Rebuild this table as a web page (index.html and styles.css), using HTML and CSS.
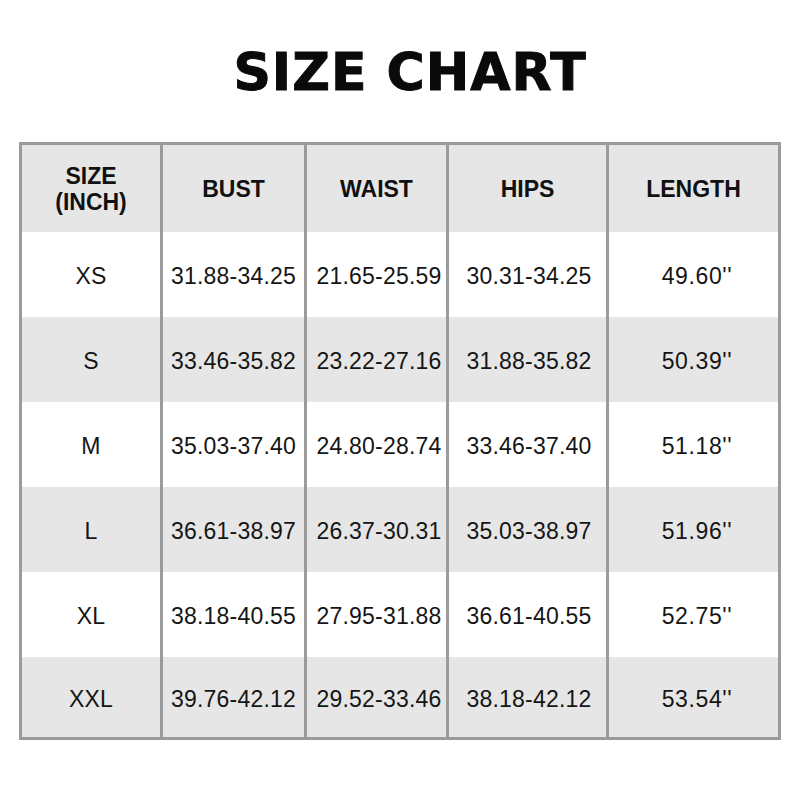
FILE: index.html
```html
<!DOCTYPE html>
<html>
<head>
<meta charset="utf-8">
<link rel="stylesheet" href="styles.css">
</head>
<body>
<div class="title-wrap"><h1 class="title">SIZE CHART</h1></div>
<div class="chart">
  <div class="cell head">SIZE<br>(INCH)</div>
  <div class="cell head sep">BUST</div>
  <div class="cell head sep">WAIST</div>
  <div class="cell head sep">HIPS</div>
  <div class="cell head sep">LENGTH</div>

  <div class="cell">XS</div>
  <div class="cell sep">31.88-34.25</div>
  <div class="cell sep waist">21.65-25.59</div>
  <div class="cell sep hips">30.31-34.25</div>
  <div class="cell sep len">49.60''</div>

  <div class="cell alt">S</div>
  <div class="cell alt sep">33.46-35.82</div>
  <div class="cell alt sep waist">23.22-27.16</div>
  <div class="cell alt sep hips">31.88-35.82</div>
  <div class="cell alt sep len">50.39''</div>

  <div class="cell">M</div>
  <div class="cell sep">35.03-37.40</div>
  <div class="cell sep waist">24.80-28.74</div>
  <div class="cell sep hips">33.46-37.40</div>
  <div class="cell sep len">51.18''</div>

  <div class="cell alt">L</div>
  <div class="cell alt sep">36.61-38.97</div>
  <div class="cell alt sep waist">26.37-30.31</div>
  <div class="cell alt sep hips">35.03-38.97</div>
  <div class="cell alt sep len">51.96''</div>

  <div class="cell">XL</div>
  <div class="cell sep">38.18-40.55</div>
  <div class="cell sep waist">27.95-31.88</div>
  <div class="cell sep hips">36.61-40.55</div>
  <div class="cell sep len">52.75''</div>

  <div class="cell alt">XXL</div>
  <div class="cell alt sep">39.76-42.12</div>
  <div class="cell alt sep waist">29.52-33.46</div>
  <div class="cell alt sep hips">38.18-42.12</div>
  <div class="cell alt sep len">53.54''</div>
</div>
</body>
</html>
```
FILE: styles.css
```css
html, body {
  margin: 0;
  padding: 0;
  background: #ffffff;
}
body {
  width: 800px;
  height: 800px;
  font-family: "Liberation Sans", Arial, sans-serif;
  color: #111;
}
.title-wrap {
  height: 142px;
  display: flex;
  align-items: center;
  justify-content: center;
  padding-left: 20px;
  box-sizing: border-box;
}
.title {
  margin: 0;
  font-family: "DejaVu Sans", sans-serif;
  font-weight: bold;
  font-size: 52px;
  letter-spacing: 1px;
  color: #0a0a0a;
  -webkit-text-stroke: 1px #0a0a0a;
  line-height: 1;
  padding-top: 2px;
}
.chart {
  margin-left: 19px;
  width: 762px;
  box-sizing: border-box;
  border: 3px solid #9b9b9b;
  display: grid;
  grid-template-columns: 138px 144px 142px 160px 172px;
  grid-template-rows: 87px 85px 85px 85px 85px 85px 80px;
}
.cell {
  display: flex;
  align-items: center;
  justify-content: center;
  text-align: center;
  font-size: 23px;
  letter-spacing: 0.2px;
  padding-top: 4px;
  box-sizing: border-box;
  background: #ffffff;
  color: #151515;
}
.cell.sep {
  border-left: 3px solid #9b9b9b;
}
.cell.waist {
  padding-left: 5px;
}
.cell.hips {
  padding-left: 3px;
}
.cell.len {
  padding-left: 7px;
  letter-spacing: 0.6px;
}
.cell.head {
  background: #e6e6e6;
  font-weight: bold;
  line-height: 26px;
  letter-spacing: 0;
  padding-top: 0;
  padding-left: 0;
  color: #111;
}
.cell.alt {
  background: #e6e6e6;
}
```
